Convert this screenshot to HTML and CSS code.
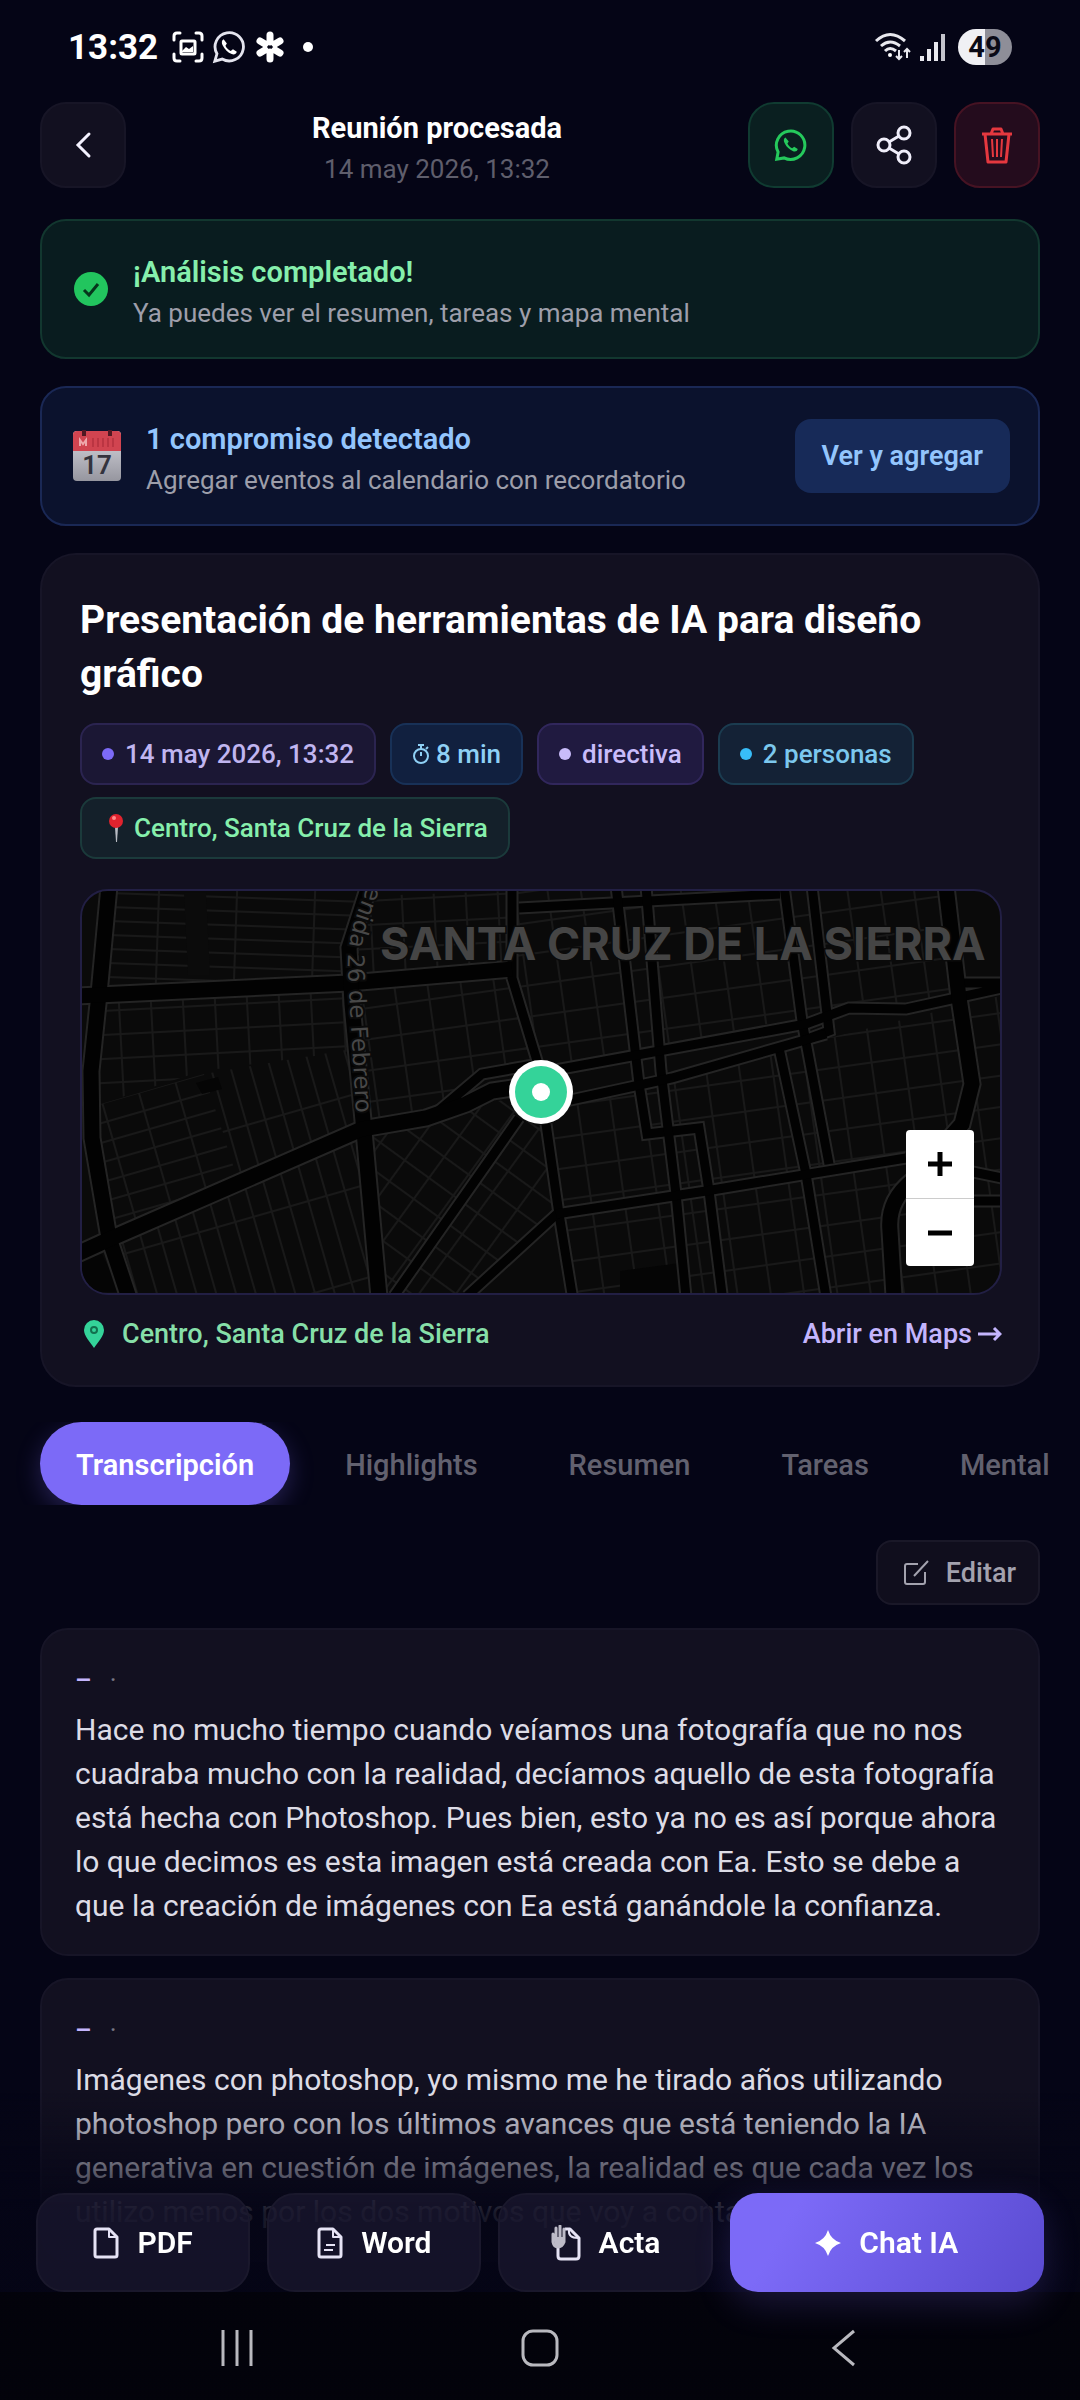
FILE: index.html
```html
<!DOCTYPE html>
<html lang="es">

<head>
    <meta charset="UTF-8">
    <meta name="viewport" content="width=device-width, initial-scale=1.0">
    <title>Reunión procesada</title>
    <link rel="stylesheet" href="styles.css">
</head>

<body>
    <div class="status">
        <div class="status-left">
            <span class="clock">13:32</span>
            <svg width="32" height="32" viewBox="0 0 32 32" fill="none" stroke="#fff" stroke-width="3" stroke-linecap="round">
                <path d="M2 9V5q0-3 3-3h3M24 2h3q3 0 3 3v4M30 23v4q0 3-3 3h-3M8 30H5q-3 0-3-3v-4" />
                <rect x="9" y="10" width="14" height="13" rx="1" stroke-width="3" />
                <path d="M10 20l4-4 3 2 4-3v6H10z" fill="#fff" stroke="none" />
            </svg>
            <svg width="34" height="34" viewBox="0 0 24 24" fill="none" stroke="#e4e4ee" stroke-width="2">
                <path d="M2 22l1.500-5.200a10 10 0 1 1 3.700 3.700z" />
                <path d="M8.200 6.500c-1.500.8-1.600 2.600-.6 4.500 1.400 2.900 3.600 5 6.300 6 1.800.6 3.200-.1 3.600-1.700l-2.700-1.700-1.600 1.200c-1.700-.8-2.900-2-3.700-3.700l1-1.500z" fill="#fff" stroke="none" />
            </svg>
            <svg class="flower" width="32" height="34" viewBox="0 0 32 34" stroke="#fff" stroke-width="7" stroke-linecap="round">
                <path d="M16 12V5M16 22v7M21 14l5-3M11 20l-5 3M11 14l-5-3M21 20l5 3" />
            </svg>
            <span class="more-dot"></span>
        </div>
        <div class="status-right">
            <svg width="38" height="30" viewBox="0 0 38 30" fill="none" stroke="#e8e8ee" stroke-width="3">
                <path d="M2 9q14-13 29 0M7 14q9-8 19 0M11 19q5-5 11 0" />
                <circle cx="16" cy="23" r="2" fill="#fff" stroke="none" />
                <path d="M25 18v9M22 24l3 3 3-3M33 26v-8M30 20l3-3 3 3" stroke-width="2" />
            </svg>
            <svg width="26" height="28" viewBox="0 0 26 28" fill="#e8e8ee">
                <path d="M0 23h4v5H0zM7 16h4v12H7zM14 9h4v19h-4z" />
                <path d="M21 1h4v27h-4z" fill="#c4c4cc" />
            </svg>
            <span class="battery">49</span>
        </div>
    </div>

    <header class="topbar">
        <button class="icon-btn" aria-label="Volver">
            <svg width="28" height="28" viewBox="0 0 28 28" fill="none" stroke="#f4f2ff" stroke-width="3" stroke-linecap="round">
                <path d="M20 3L9 14l11 11" />
            </svg>
        </button>
        <div class="topbar-title">
            <h1>Reunión procesada</h1>
            <p>14 may 2026, 13:32</p>
        </div>
        <button class="icon-btn green" aria-label="WhatsApp">
            <svg width="36" height="36" viewBox="0 0 24 24" fill="none" stroke="#25c95c" stroke-width="2">
                <path d="M2.500 21.500l.9-4.800a9.500 9.500 0 1 1 4 3.900z" />
                <path d="M8.300 7c-1.300.7-1.400 2.200-.5 3.900 1.200 2.500 3.200 4.400 5.600 5.200 1.500.5 2.800 0 3.100-1.500l-2.400-1.400-1.300 1c-1.500-.7-2.500-1.700-3.200-3.200l.9-1.300z" fill="#25c95c" stroke="none" />
            </svg>
        </button>
        <button class="icon-btn" aria-label="Compartir">
            <svg width="36" height="40" viewBox="0 0 36 40" fill="none" stroke="#f0eefa" stroke-width="3">
                <circle cx="8" cy="20" r="6" />
                <circle cx="28" cy="8" r="6" />
                <circle cx="28" cy="32" r="6" />
                <path d="M13 17l10-6M13 23l10 6" />
            </svg>
        </button>
        <button class="icon-btn red" aria-label="Eliminar">
            <svg width="34" height="38" viewBox="0 0 34 38" fill="none" stroke="#e5383f" stroke-width="3" stroke-linejoin="round">
                <path d="M2 8h30M11 8l2-5h8l2 5M5 8l3 28h18l3-28" />
                <path d="M12 13l1 18M17 13v18M22 13l-1 18" stroke-width="2" />
            </svg>
        </button>
    </header>

    <main>
        <section class="banner done">
            <svg width="34" height="34" viewBox="0 0 34 34">
                <circle cx="17" cy="17" r="17" fill="#22c55e" />
                <path d="M10 18l5 5 9-11" fill="none" stroke="#06351c" stroke-width="3" />
            </svg>
            <div class="banner-text">
                <h2>¡Análisis completado!</h2>
                <p>Ya puedes ver el resumen, tareas y mapa mental</p>
            </div>
        </section>

        <section class="banner events">
            <svg width="50" height="52" viewBox="0 0 50 52">
                <defs>
                    <linearGradient id="paper" x1="0" y1="0" x2="0" y2="1">
                        <stop offset="0" stop-color="#d8d8e0" />
                        <stop offset="1" stop-color="#96969f" />
                    </linearGradient>
                </defs>
                <rect x="1" y="1" width="48" height="50" rx="4" fill="url(#paper)" />
                <path d="M1 21V5q0-4 4-4h40q4 0 4 4v16z" fill="#d14450" />
                <path d="M12 0v6M38 0v6" stroke="#501822" stroke-width="4" />
                <path d="M8 16v-6l3 4 3-4v6" stroke="#eea7ab" stroke-width="2" fill="none" />
                <path d="M21 8v9M26 8v9M31 8v9M36 8v9M41 8v9" stroke="#bb3542" stroke-width="2" />
                <text x="25" y="44" text-anchor="middle" class="cal-day">17</text>
            </svg>
            <div class="banner-text">
                <h2>1 compromiso detectado</h2>
                <p>Agregar eventos al calendario con recordatorio</p>
            </div>
            <button class="add-btn">Ver y agregar</button>
        </section>

        <section class="meeting">
            <h2>Presentación de herramientas de IA para diseño gráfico</h2>
            <div class="chips">
                <span class="chip date"><i class="dot"></i>14 may 2026, 13:32</span>
                <span class="chip time">
                    <svg width="18" height="22" viewBox="0 0 18 22" fill="none" stroke="#8fd0f5" stroke-width="2">
                        <circle cx="9" cy="13" r="7" />
                        <path d="M6 2h6M9 2v4M9 9v4M14 6l2-2" />
                    </svg>8 min</span>
                <span class="chip kind"><i class="dot"></i>directiva</span>
                <span class="chip people"><i class="dot"></i>2 personas</span>
                <span class="chip place">
                    <svg width="26" height="30" viewBox="0 0 26 30">
                        <path d="M13 14h3l-1 15h-1z" fill="#b9bcc4" />
                        <circle cx="14" cy="8" r="7" fill="#e0232e" />
                        <circle cx="12" cy="5" r="2" fill="#ff8a8a" />
                    </svg>Centro, Santa Cruz de la Sierra</span>
            </div>

            <div class="map">
                <svg class="map-art" viewBox="0 0 922 402" preserveAspectRatio="xMidYMid slice">
                    <defs>
                        <pattern id="rows" width="78" height="14" patternUnits="userSpaceOnUse" patternTransform="rotate(2)">
                            <path d="M0 1h78M1 0v14" />
                        </pattern>
                        <pattern id="blocks" width="32" height="24" patternUnits="userSpaceOnUse" patternTransform="rotate(-3)">
                            <path d="M0 1h32M1 0v24" />
                        </pattern>
                        <pattern id="west" width="38" height="19" patternUnits="userSpaceOnUse" patternTransform="rotate(-16)">
                            <path d="M0 1h38M1 0v19" />
                        </pattern>
                        <pattern id="cols" width="19" height="90" patternUnits="userSpaceOnUse" patternTransform="rotate(-16)">
                            <path d="M0 1h19M1 0v90" />
                        </pattern>
                        <pattern id="slant" width="30" height="26" patternUnits="userSpaceOnUse" patternTransform="rotate(36)">
                            <path d="M0 1h30M1 0v26" />
                        </pattern>
                        <pattern id="east" width="33" height="31" patternUnits="userSpaceOnUse" patternTransform="rotate(-8)">
                            <path d="M0 1h33M1 0v31" />
                        </pattern>
                    </defs>

                    <!-- side streets -->
                    <g class="streets">
                        <path d="M29 0h257l-18 88L19 100z" fill="url(#rows)" />
                        <path d="M18 112l252-12 2 60-150 20L14 215z" fill="url(#blocks)" />
                        <path d="M14 215l110-32 35 110L30 342 12 250z" fill="url(#west)" />
                        <path d="M124 183l148-25 10 76-123 57z" fill="url(#cols)" />
                        <path d="M38 350l243-105 18 160H50z" fill="url(#cols)" />
                        <path d="M290 5l142-5v76l-160 14z" fill="url(#blocks)" />
                        <path d="M276 98l154-12 25 90-55 8-46 40-70 12z" fill="url(#east)" />
                        <path d="M290 240l100-22 50-14 24 40 16 84-90 75h-90z" fill="url(#slant)" />
                        <path d="M438 0h430l12 112-60 5-56 0-280 58-40 5-14-90z" fill="url(#east)" />
                        <path d="M470 215l450-110v300H494z" fill="url(#east)" />
                    </g>
                    <path class="dark-lot" d="M116 192l22-6 4 12-20 5zM0 370l22-7 18 38H0zM540 380l60-8 5 30h-65z" />
                    <path class="lot" d="M104 2h22l4 82h-22z" />

                    <!-- avenues: light edge first, black asphalt on top -->
                    <g class="edge">
                        <path d="M432 0v87l29 96M466 233l13 90 13 80" />
                        <path d="M439 17l261-14" />
                        <path d="M536 -5l23 198 8 50 52-6 10 63 13 103" />
                        <path d="M566 -5l15 185 15 123 10 103" />
                        <path d="M704 -5l18 135 27 143" />
                        <path d="M732 -5l17 145-27 10" />
                        <path d="M699 157l27 126 20 123" />
                        <path d="M470 180l256-47 43-16 57 1 96-21M880 92h44" />
                        <path d="M486 210l106-23 154-44" />
                        <path d="M356 222l46-39 57-10M439 227L314 405M478 322l-91 83" />
                        <path d="M476 323l150-23 200-33M826 267l96 20M892 310h30" />
                    </g>
                    <g class="edge wide">
                        <path d="M29 -5L19 103l-8 77 1 67 17 100 20 60" />
                        <path d="M-5 105l274-13 163-14" />
                        <path d="M289 -5l-20 62 3 56 12 127 15 166" />
                        <path d="M-5 364l37-17 250-109 64-11 40-14 26-13 47-7" />
                        <path d="M866 -5l13 112 13 86-10 40-50 57q-25 20-22 50l4 65" />
                    </g>
                    <g class="asphalt">
                        <path d="M432 0v87l29 96M466 233l13 90 13 80" />
                        <path d="M439 17l261-14" />
                        <path d="M536 -5l23 198 8 50 52-6 10 63 13 103" />
                        <path d="M566 -5l15 185 15 123 10 103" />
                        <path d="M704 -5l18 135 27 143" />
                        <path d="M732 -5l17 145-27 10" />
                        <path d="M699 157l27 126 20 123" />
                        <path d="M470 180l256-47 43-16 57 1 96-21M880 92h44" />
                        <path d="M486 210l106-23 154-44" />
                        <path d="M356 222l46-39 57-10M439 227L314 405M478 322l-91 83" />
                        <path d="M476 323l150-23 200-33M826 267l96 20M892 310h30" />
                    </g>
                    <g class="asphalt wide">
                        <path d="M29 -5L19 103l-8 77 1 67 17 100 20 60" />
                        <path d="M-5 105l274-13 163-14" />
                        <path d="M289 -5l-20 62 3 56 12 127 15 166" />
                        <path d="M-5 364l37-17 250-109 64-11 40-14 26-13 47-7" />
                        <path d="M866 -5l13 112 13 86-10 40-50 57q-25 20-22 50l4 65" />
                    </g>

                    <path id="febrero" d="M310 -90L284 5q-18 40-16 76l8 141" fill="none" />
                    <text class="street-name"><textPath href="#febrero" startOffset="100%">Avenida 26 de Febrero</textPath></text>
                    <text class="city-name" x="300" y="69">SANTA CRUZ DE LA SIERRA</text>

                    <circle cx="461" cy="201" r="32" fill="#fff" />
                    <circle cx="461" cy="201" r="26" fill="#34d399" />
                    <circle cx="461" cy="201" r="9" fill="#fff" />
                </svg>
                <div class="zoom">
                    <button aria-label="Acercar"><svg width="24" height="24" viewBox="0 0 24 24" stroke="#000" stroke-width="5"><path d="M0 12h24M12 0v24" /></svg></button>
                    <button aria-label="Alejar"><svg width="24" height="24" viewBox="0 0 24 24" stroke="#000" stroke-width="5"><path d="M0 12h24" /></svg></button>
                </div>
            </div>

            <div class="map-foot">
                <span class="where">
                    <svg width="20" height="28" viewBox="0 0 20 28">
                        <path d="M10 0a10 10 0 0 1 10 10c0 6-6 12-10 18C6 22 0 16 0 10A10 10 0 0 1 10 0z" fill="#34d399" />
                        <circle cx="10" cy="10" r="3" fill="none" stroke="#12704e" stroke-width="2" />
                    </svg>Centro, Santa Cruz de la Sierra</span>
                <a href="#">Abrir en Maps
                    <svg width="24" height="18" viewBox="0 0 24 18" fill="none" stroke="#c4b5fd" stroke-width="3">
                        <path d="M0 9h21M16 3l6 6-6 6" />
                    </svg></a>
            </div>
        </section>

        <nav class="tabs">
            <button class="active">Transcripción</button>
            <button>Highlights</button>
            <button>Resumen</button>
            <button>Tareas</button>
            <button>Mental</button>
        </nav>

        <div class="tools">
            <button class="edit-btn">
                <svg width="26" height="26" viewBox="0 0 26 26" fill="none" stroke="#a3a2ae" stroke-width="2">
                    <path d="M15 4H4q-2 0-2 2v16q0 2 2 2h16q2 0 2-2V12M11 16L25 1" />
                </svg>Editar</button>
        </div>

        <article class="segment">
            <div class="segment-head"><b>–</b><span>·</span></div>
            <p>Hace no mucho tiempo cuando veíamos una fotografía que no nos cuadraba mucho con la realidad, decíamos aquello de esta fotografía está hecha con Photoshop. Pues bien, esto ya no es así porque ahora lo que decimos es esta imagen está creada con Ea. Esto se debe a que la creación de imágenes con Ea está ganándole la confianza.</p>
        </article>
        <article class="segment">
            <div class="segment-head"><b>–</b><span>·</span></div>
            <p>Imágenes con photoshop, yo mismo me he tirado años utilizando photoshop pero con los últimos avances que está teniendo la IA generativa en cuestión de imágenes, la realidad es que cada vez los utilizo menos por los dos motivos que voy a contar.</p>
        </article>
    </main>

    <footer class="dock">
        <div class="actions">
            <button class="act">
                <svg width="26" height="32" viewBox="0 0 26 32" fill="none" stroke="#e6e3f5" stroke-width="3" stroke-linejoin="round">
                    <path d="M2 4q0-2 2-2h12l8 8v18q0 2-2 2H4q-2 0-2-2z" />
                    <path d="M16 2v8h8" stroke-width="2" />
                </svg>PDF</button>
            <button class="act">
                <svg width="26" height="32" viewBox="0 0 26 32" fill="none" stroke="#e6e3f5" stroke-width="3" stroke-linejoin="round">
                    <path d="M2 4q0-2 2-2h12l8 8v18q0 2-2 2H4q-2 0-2-2z" />
                    <path d="M16 2v8h8M9 18h9M7 23h9" stroke-width="2" />
                </svg>Word</button>
            <button class="act">
                <svg width="30" height="36" viewBox="0 0 30 36" fill="none" stroke="#e6e3f5" stroke-width="3" stroke-linejoin="round">
                    <path d="M14 4h5l9 9v18q0 3-3 3H10q-3 0-3-3v-9" />
                    <path d="M18 5q-1 8 9 8" stroke-width="2" />
                    <path d="M2 9v8q1 5 5 5t6-5V4M5 15V3M9 15V1" stroke="#bdbbc8" stroke-width="3" stroke-linecap="round" />
                    <path d="M3 12h10v6q-2 4-6 4t-4-6z" fill="#bdbbc8" stroke="none" />
                </svg>Acta</button>
            <button class="act chat">
                <svg width="26" height="26" viewBox="0 0 26 26" fill="#fff">
                    <path d="M13 0q3 10 13 13-10 3-13 13Q10 16 0 13 10 10 13 0z" />
                </svg>Chat IA</button>
        </div>
        <div class="sysnav">
            <svg width="36" height="36" viewBox="0 0 36 36" stroke="#b9b9bf" stroke-width="3"><path d="M4 0v36M18 0v36M32 0v36" /></svg>
            <svg width="38" height="38" viewBox="0 0 38 38" fill="none" stroke="#b9b9bf" stroke-width="3"><rect x="2" y="2" width="34" height="34" rx="10" /></svg>
            <svg width="36" height="38" viewBox="0 0 36 38" fill="none" stroke="#b9b9bf" stroke-width="3"><path d="M29 2L9 19l20 17" /></svg>
        </div>
    </footer>
</body>

</html>
```
FILE: styles.css
```css
* {
    box-sizing: border-box;
}

body {
    margin: 0;
    height: 100vh;
    overflow: hidden;
    background-color: #050516;
    color: #fff;
    font-family: Roboto, "Liberation Sans", sans-serif;
    font-size: 26px;
}

h1, h2, p {
    margin: 0;
}

button {
    font: inherit;
    color: inherit;
    border: 0;
    background: none;
    padding: 0;
}

svg {
    flex: none;
}

/* phone status bar */
.status {
    display: flex;
    justify-content: space-between;
    align-items: center;
    height: 94px;
    padding: 0 68px;
}

.status-left {
    display: flex;
    align-items: center;
    gap: 8px;
}

.clock {
    font-size: 35px;
    font-weight: 700;
    margin-right: 6px;
}

.more-dot {
    width: 10px;
    height: 10px;
    border-radius: 50%;
    background-color: #fff;
    margin-left: 9px;
}

.status-right {
    display: flex;
    align-items: center;
    gap: 8px;
}

.battery {
    width: 54px;
    height: 36px;
    margin-left: 4px;
    border-radius: 18px;
    background: linear-gradient(90deg, #f0f0f4 50%, #8e8e98 50%);
    color: #0a0a16;
    font-size: 29px;
    font-weight: 700;
    line-height: 36px;
    text-align: center;
}

/* header */
.topbar {
    display: flex;
    align-items: center;
    gap: 17px;
    padding: 8px 40px 0;
}

.topbar-title {
    flex: 1;
    padding-top: 4px;
    text-align: center;
}

.topbar-title h1 {
    font-size: 29px;
    font-weight: 700;
    line-height: 43px;
}

.topbar-title p {
    color: #5f5e6c;
    line-height: 38px;
}

.icon-btn {
    display: flex;
    align-items: center;
    justify-content: center;
    width: 86px;
    height: 86px;
    border-radius: 26px;
    border: 2px solid #171526;
    background-color: #121020;
}

.icon-btn.green {
    background-color: #0a1f20;
    border-color: #103b31;
}

.icon-btn.red {
    background-color: #240c1d;
    border-color: #461323;
}

main {
    display: flex;
    flex-direction: column;
    padding: 31px 40px 0;
}

/* banners */
.banner {
    display: flex;
    align-items: center;
    min-height: 140px;
    padding: 0 28px 0 32px;
    border-radius: 26px;
    border: 2px solid;
    margin-bottom: 27px;
}

.done {
    gap: 25px;
    background-color: #091c1f;
    border-color: #12372f;
}

.events {
    gap: 24px;
    padding-left: 30px;
    background-color: #0b122d;
    border-color: #1a2855;
}

.banner-text {
    flex: 1;
    padding-top: 6px;
}

.banner h2 {
    font-size: 29px;
    font-weight: 600;
    line-height: 42px;
}

.banner p {
    color: #9d9eaa;
    line-height: 40px;
}

.done h2 {
    color: #86efac;
}

.events h2 {
    color: #93c5fd;
}

.cal-day {
    font-size: 26px;
    font-weight: 600;
    fill: #33333d;
}

.add-btn {
    height: 74px;
    padding: 0 27px;
    border-radius: 16px;
    background-color: #172a58;
    color: #93c5fd;
    font-size: 27px;
    font-weight: 600;
}

/* meeting card */
.meeting {
    padding: 38px 36px 30px 38px;
    border-radius: 36px;
    border: 2px solid #171527;
    background-color: #121020;
    margin-bottom: 35px;
}

.meeting h2 {
    font-size: 39px;
    font-weight: 700;
    line-height: 54px;
    margin-bottom: 22px;
}

.chips {
    display: flex;
    flex-wrap: wrap;
    gap: 12px 14px;
    margin-bottom: 30px;
}

.chip {
    display: flex;
    align-items: center;
    gap: 6px;
    height: 62px;
    padding: 0 20px;
    border-radius: 16px;
    border: 2px solid;
    font-weight: 500;
}

.dot {
    width: 12px;
    height: 12px;
    margin-right: 5px;
    border-radius: 50%;
    background-color: currentColor;
}

.date {
    background-color: #1b1734;
    border-color: #2b2450;
    color: #c0b5f0;
}

.date .dot {
    background-color: #7c6af7;
}

.time {
    background-color: #11203f;
    border-color: #183157;
    color: #8fd0f5;
}

.kind {
    background-color: #201a40;
    border-color: #31275c;
    color: #c8bcfa;
}

.people {
    background-color: #142236;
    border-color: #1b3c50;
    color: #7cc8ee;
}

.people .dot {
    background-color: #38bdf8;
}

.place {
    background-color: #14202a;
    border-color: #1b3a3b;
    color: #86efac;
}

.map {
    position: relative;
    height: 406px;
    overflow: hidden;
    border: 2px solid #221f44;
    border-radius: 28px;
    background-color: #0a0a0a;
}

.map-art {
    display: block;
    width: 100%;
    height: 100%;
}

.map pattern path {
    fill: none;
    stroke: #191919;
    stroke-width: 2;
}

.dark-lot {
    fill: #050505;
}

.lot {
    fill: #0b0b0b;
}

.edge, .asphalt {
    fill: none;
    stroke: #242424;
    stroke-width: 13;
}

.edge.wide {
    stroke-width: 19;
}

.asphalt {
    stroke: #020202;
    stroke-width: 9;
}

.asphalt.wide {
    stroke-width: 15;
}

.street-name {
    font-family: "DejaVu Sans", sans-serif;
    font-size: 23px;
    text-anchor: end;
    fill: #484848;
    stroke: #0a0a0a;
    stroke-width: 4;
    paint-order: stroke;
}

.city-name {
    font-family: Inter, sans-serif;
    font-size: 45px;
    font-weight: 700;
    fill: #454545;
    stroke: #0a0a0a;
    stroke-width: 3;
    paint-order: stroke;
}

.zoom {
    position: absolute;
    right: 26px;
    bottom: 27px;
    width: 68px;
    border-radius: 4px;
    background-color: #fff;
}

.zoom button {
    display: flex;
    align-items: center;
    justify-content: center;
    width: 100%;
    height: 68px;
}

.zoom button + button {
    border-top: 1px solid #ccc;
}

.map-foot {
    display: flex;
    justify-content: space-between;
    align-items: center;
    padding-top: 18px;
    font-size: 27px;
    font-weight: 500;
    line-height: 42px;
}

.where {
    display: flex;
    align-items: center;
    gap: 18px;
    padding-left: 4px;
    color: #86dfa8;
}

.map-foot a {
    display: flex;
    align-items: center;
    gap: 6px;
    color: #c4b5fd;
    text-decoration: none;
}

/* tabs */
.tabs {
    display: flex;
    gap: 19px;
    margin: 0 -40px;
    padding: 0 40px;
    overflow: hidden;
}

.tabs button {
    flex: none;
    height: 83px;
    padding: 2px 36px 0;
    border-radius: 42px;
    color: #62616f;
    font-size: 29px;
    font-weight: 500;
}

.tabs .active {
    background-color: #7c6af7;
    color: #fff;
    font-weight: 600;
    box-shadow: 0 8px 24px #7c6af744;
}

.tools {
    display: flex;
    justify-content: flex-end;
    padding: 35px 0 23px;
}

.edit-btn {
    display: flex;
    align-items: center;
    gap: 17px;
    height: 65px;
    padding: 0 22px 0 25px;
    border-radius: 16px;
    border: 2px solid #1a1828;
    background-color: #100e1d;
    color: #a3a2ae;
    font-size: 27px;
    font-weight: 500;
}

/* transcript */
.segment {
    padding: 28px 32px 26px 33px;
    border-radius: 28px;
    border: 2px solid #171527;
    background-color: #121020;
    margin-bottom: 22px;
}

.segment-head {
    display: flex;
    gap: 18px;
    height: 50px;
    line-height: 44px;
    color: #777684;
}

.segment-head b {
    color: #c4b5fd;
    font-weight: 500;
}

.segment p {
    color: #dddce6;
    font-size: 30px;
    line-height: 44px;
}

/* bottom actions over the transcript */
.dock {
    position: fixed;
    left: 0;
    right: 0;
    bottom: 0;
    padding-top: 100px;
    background: linear-gradient(#05051600, #050516e8 120px, #050516f6);
}

.actions {
    display: flex;
    gap: 17px;
    padding: 0 36px;
}

.act {
    display: flex;
    flex: 214;
    align-items: center;
    justify-content: center;
    gap: 18px;
    height: 99px;
    border-radius: 28px;
    border: 2px solid #1a182c;
    background-color: #1c1932aa;
    font-size: 30px;
    font-weight: 600;
}

.chat {
    flex: 320;
    border: 0;
    background: linear-gradient(120deg, #7c6af7 20%, #5a4bd1);
    box-shadow: 0 12px 36px #7c6af733;
}

.sysnav {
    display: flex;
    justify-content: space-around;
    align-items: center;
    height: 108px;
    padding: 4px 86px 0;
    background-color: #020209cc;
}
```
